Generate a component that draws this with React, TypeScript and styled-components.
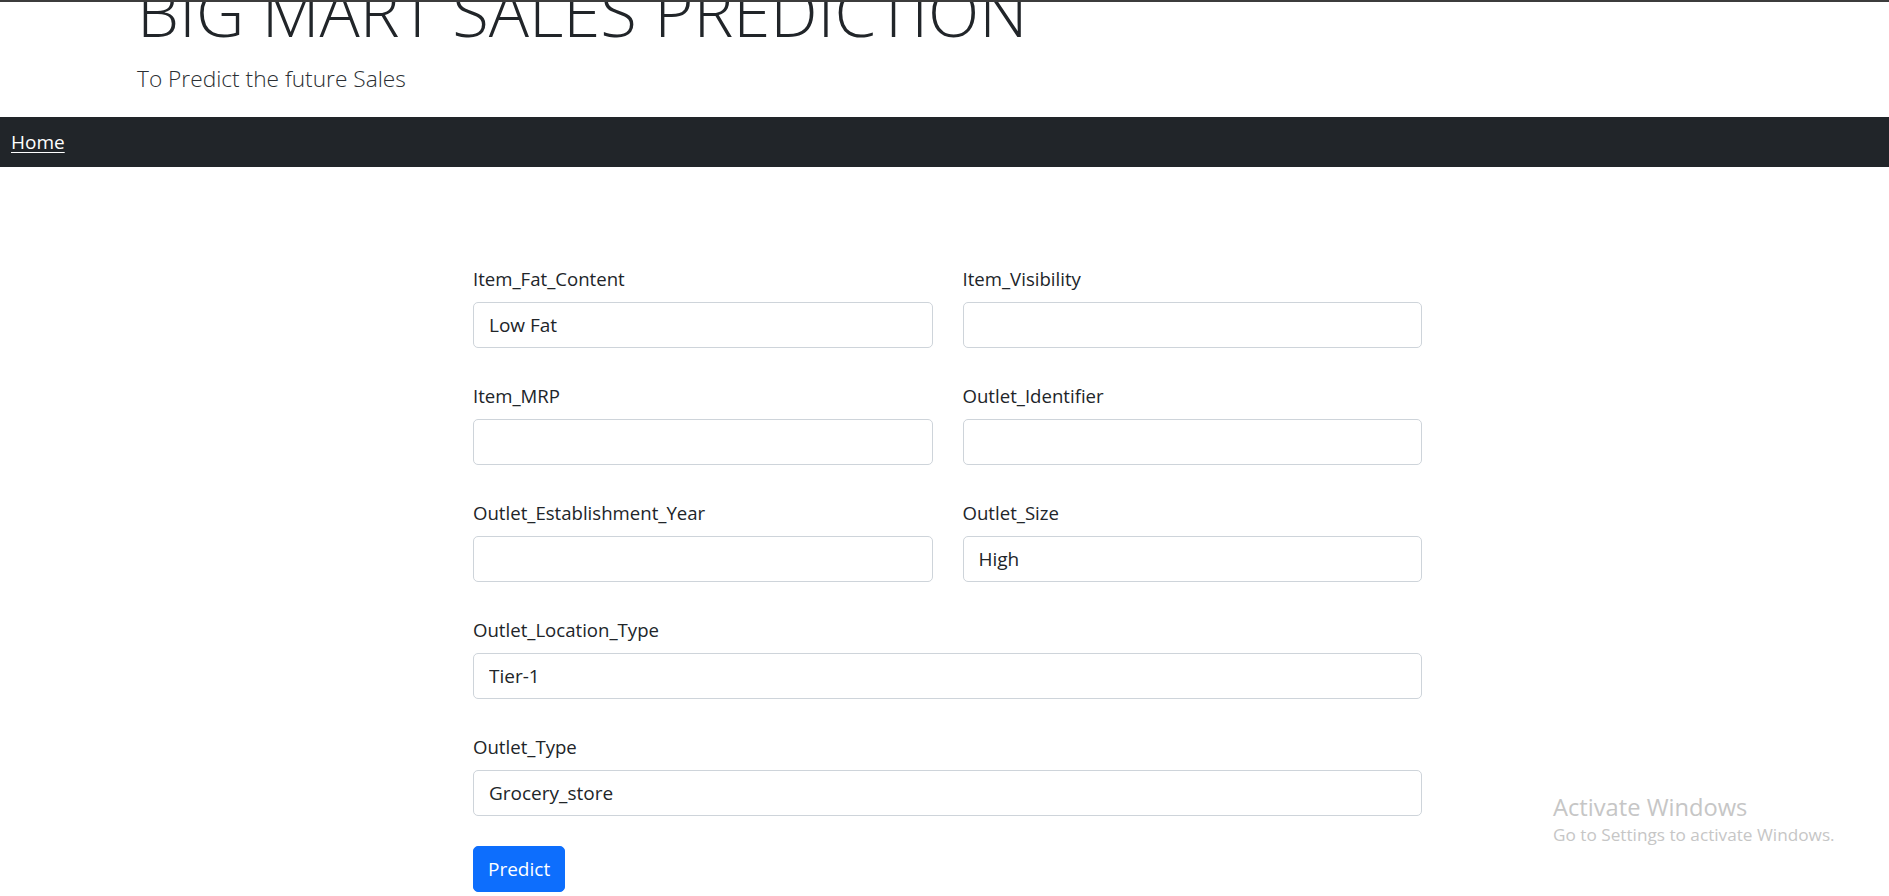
import React from "react";
import styled, { createGlobalStyle } from "styled-components";

const GlobalStyle = createGlobalStyle`
  html, body {
    margin: 0;
    padding: 0;
    background: #ffffff;
  }
  body {
    font-family: "Open Sans", "Noto Sans", "Liberation Sans", sans-serif;
    color: #212529;
    overflow: hidden;
  }
  * { box-sizing: border-box; }
`;

const Page = styled.div`
  min-height: 896px;
  border-top: 2px solid #3c3c3c;
  position: relative;
`;

const Header = styled.header`
  height: 115px;
  overflow: hidden;
  padding-left: 137px;
`;

const Title = styled.h1`
  margin: -31px 0 0 0;
  font-size: 67px;
  font-weight: 300;
  line-height: 80px;
  white-space: nowrap;
  color: #212529;
`;

const Lead = styled.p`
  margin: 10px 0 0 0;
  font-size: 22.7px;
  font-weight: 300;
  line-height: 36px;
  color: #2b2f33;
`;

const NavBar = styled.nav`
  height: 50px;
  background: #212529;
  display: flex;
  align-items: center;
  padding-left: 11px;
`;

const NavLink = styled.a`
  color: #ffffff;
  font-size: 19px;
  text-decoration: underline;
  text-underline-offset: 3px;
`;

const Form = styled.form`
  width: 949px;
  margin: 97px 0 0 473px;
  display: grid;
  grid-template-columns: 1fr 1fr;
  column-gap: 30px;
  row-gap: 33px;
`;

const Field = styled.div<{ $wide?: boolean }>`
  display: flex;
  flex-direction: column;
  grid-column: ${(p) => (p.$wide ? "1 / -1" : "auto")};
`;

const Label = styled.label`
  font-size: 18.6px;
  line-height: 29px;
  margin-bottom: 9px;
  color: #212529;
`;

const Input = styled.input`
  height: 46px;
  width: 100%;
  border: 1px solid #ced4da;
  border-radius: 5px;
  padding: 0 15px;
  font-family: inherit;
  font-size: 19px;
  color: #212529;
  background: #ffffff;
  outline: none;
`;

const Actions = styled.div`
  grid-column: 1 / -1;
  margin-top: -3px;
`;

const Button = styled.button`
  height: 46px;
  padding: 0 14px;
  border: 1px solid #0d6efd;
  border-radius: 5px;
  background: #0d6efd;
  color: #ffffff;
  font-family: inherit;
  font-size: 19px;
  cursor: pointer;
`;

const Watermark = styled.div`
  position: absolute;
  left: 1553px;
  top: 790px;
  color: #c6c6c6;
  pointer-events: none;
`;

const WatermarkTitle = styled.div`
  font-size: 23.7px;
  line-height: 30px;
`;

const WatermarkText = styled.div`
  font-size: 17.2px;
  line-height: 22px;
  margin-top: 2px;
`;

type FieldDef = { label: string; value: string; wide?: boolean };

const fields: FieldDef[] = [
  { label: "Item_Fat_Content", value: "Low Fat" },
  { label: "Item_Visibility", value: "" },
  { label: "Item_MRP", value: "" },
  { label: "Outlet_Identifier", value: "" },
  { label: "Outlet_Establishment_Year", value: "" },
  { label: "Outlet_Size", value: "High" },
  { label: "Outlet_Location_Type", value: "Tier-1", wide: true },
  { label: "Outlet_Type", value: "Grocery_store", wide: true },
];

export default function App() {
  return (
    <Page>
      <GlobalStyle />
      <Header>
        <Title>BIG MART SALES PREDICTION</Title>
        <Lead>To Predict the future Sales</Lead>
      </Header>
      <NavBar>
        <NavLink href="#">Home</NavLink>
      </NavBar>
      <Form onSubmit={(e) => e.preventDefault()}>
        {fields.map((f) => (
          <Field key={f.label} $wide={f.wide}>
            <Label>{f.label}</Label>
            <Input type="text" defaultValue={f.value} />
          </Field>
        ))}
        <Actions>
          <Button type="submit">Predict</Button>
        </Actions>
      </Form>
      <Watermark>
        <WatermarkTitle>Activate Windows</WatermarkTitle>
        <WatermarkText>Go to Settings to activate Windows.</WatermarkText>
      </Watermark>
    </Page>
  );
}
